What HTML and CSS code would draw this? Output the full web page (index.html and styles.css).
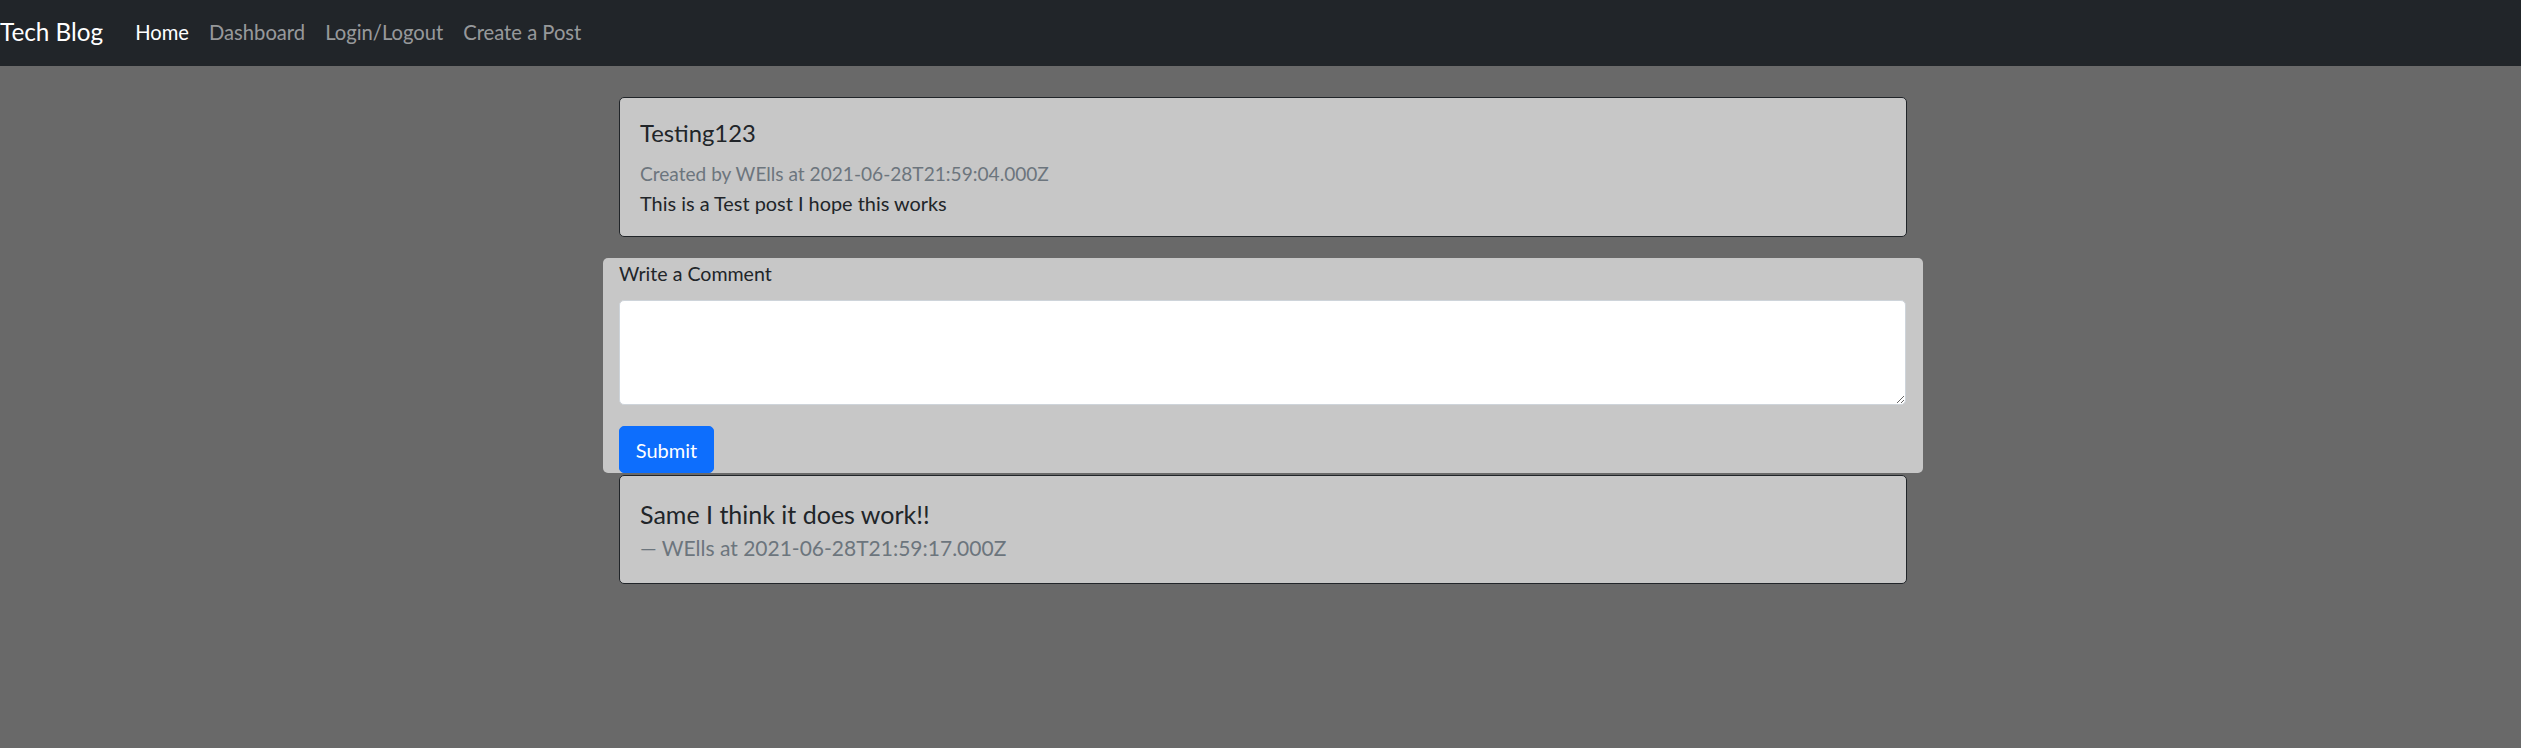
FILE: index.html
```html
<!DOCTYPE html>
<html lang="en">
<head>
<meta charset="utf-8">
<title>Tech Blog</title>
<link rel="stylesheet" href="styles.css">
</head>
<body>
<nav class="navbar">
  <a class="brand" href="#">Tech Blog</a>
  <ul class="nav">
    <li><a class="nav-link active" href="#">Home</a></li>
    <li><a class="nav-link" href="#">Dashboard</a></li>
    <li><a class="nav-link" href="#">Login/Logout</a></li>
    <li><a class="nav-link" href="#">Create a Post</a></li>
  </ul>
</nav>
<main class="main">
  <section class="card post">
    <h5 class="card-title">Testing123</h5>
    <h6 class="card-subtitle">Created by WElls at 2021-06-28T21:59:04.000Z</h6>
    <p class="card-text">This is a Test post I hope this works</p>
  </section>
  <form class="comment-form">
    <label class="form-label" for="comment">Write a Comment</label>
    <textarea id="comment" class="form-control"></textarea>
    <button type="button" class="btn">Submit</button>
  </form>
  <section class="card comment">
    <blockquote class="quote">
      <p class="quote-text">Same I think it does work!!</p>
    </blockquote>
    <p class="quote-footer">WElls at 2021-06-28T21:59:17.000Z</p>
  </section>
</main>
</body>
</html>
```
FILE: styles.css
```css
* { box-sizing: border-box; }
html, body { margin: 0; padding: 0; }
body {
  background: #696969;
  font-family: Lato, "Liberation Sans", sans-serif;
  color: #212529;
  min-height: 748px;
}
a { text-decoration: none; }

.navbar {
  display: flex;
  align-items: flex-start;
  height: 66px;
  padding-top: 17px;
  background: #212529;
}
.brand {
  font-size: 24.3px;
  line-height: 30px;
  color: #fff;
  margin-right: 22px;
}
.nav {
  display: flex;
  list-style: none;
  margin: 0;
  padding: 0;
}
.nav-link {
  display: block;
  font-size: 20.2px;
  line-height: 30px;
  padding: 0 10px;
  color: rgba(255, 255, 255, 0.55);
}
.nav-link.active { color: #fff; }

.main {
  width: 1320px;
  margin: 0 auto;
  padding-left: 5px;
  box-sizing: content-box;
  padding-top: 31px;
}

.card {
  margin: 0 16px;
  background: #c7c7c7;
  border: 1px solid #212529;
  border-radius: 5px;
}
.post { padding: 20px 20px 18px; }
.card-title {
  margin: 0 0 12px;
  font-size: 23.8px;
  line-height: 30px;
  font-weight: 400;
}
.card-subtitle {
  margin: 0;
  font-size: 19.1px;
  line-height: 28px;
  font-weight: 400;
  color: #6c757d;
}
.card-text {
  margin: 0;
  font-size: 19.9px;
  line-height: 30px;
}

.comment-form {
  margin-top: 21px;
  background: #c7c7c7;
  border-radius: 5px;
  padding: 1px 17px 0 16px;
  display: flex;
  flex-direction: column;
  align-items: flex-start;
}
.form-label {
  font-size: 19.6px;
  line-height: 30px;
  margin-bottom: 11px;
}
.form-control {
  display: block;
  width: 100%;
  height: 105px;
  border: 1px solid #ced4da;
  border-radius: 5px;
  background: #fff;
  font-family: inherit;
  font-size: 20px;
  resize: vertical;
  margin: 0 0 21px;
}
.btn {
  font-family: inherit;
  font-size: 20px;
  line-height: 30px;
  padding: 7.5px 15px;
  color: #fff;
  background: #0d6efd;
  border: 1px solid #0d6efd;
  border-radius: 5px;
  width: 95px;
  cursor: pointer;
}

.comment {
  margin-top: 2px;
  padding: 20px 20px 19px;
}
.quote { margin: 0; }
.quote-text {
  margin: 0;
  font-size: 25px;
  line-height: 36px;
}
.quote-footer {
  margin: 0;
  font-size: 21px;
  line-height: 32px;
  color: #6c757d;
}
.quote-footer::before { content: "\2014\00A0"; }
```
